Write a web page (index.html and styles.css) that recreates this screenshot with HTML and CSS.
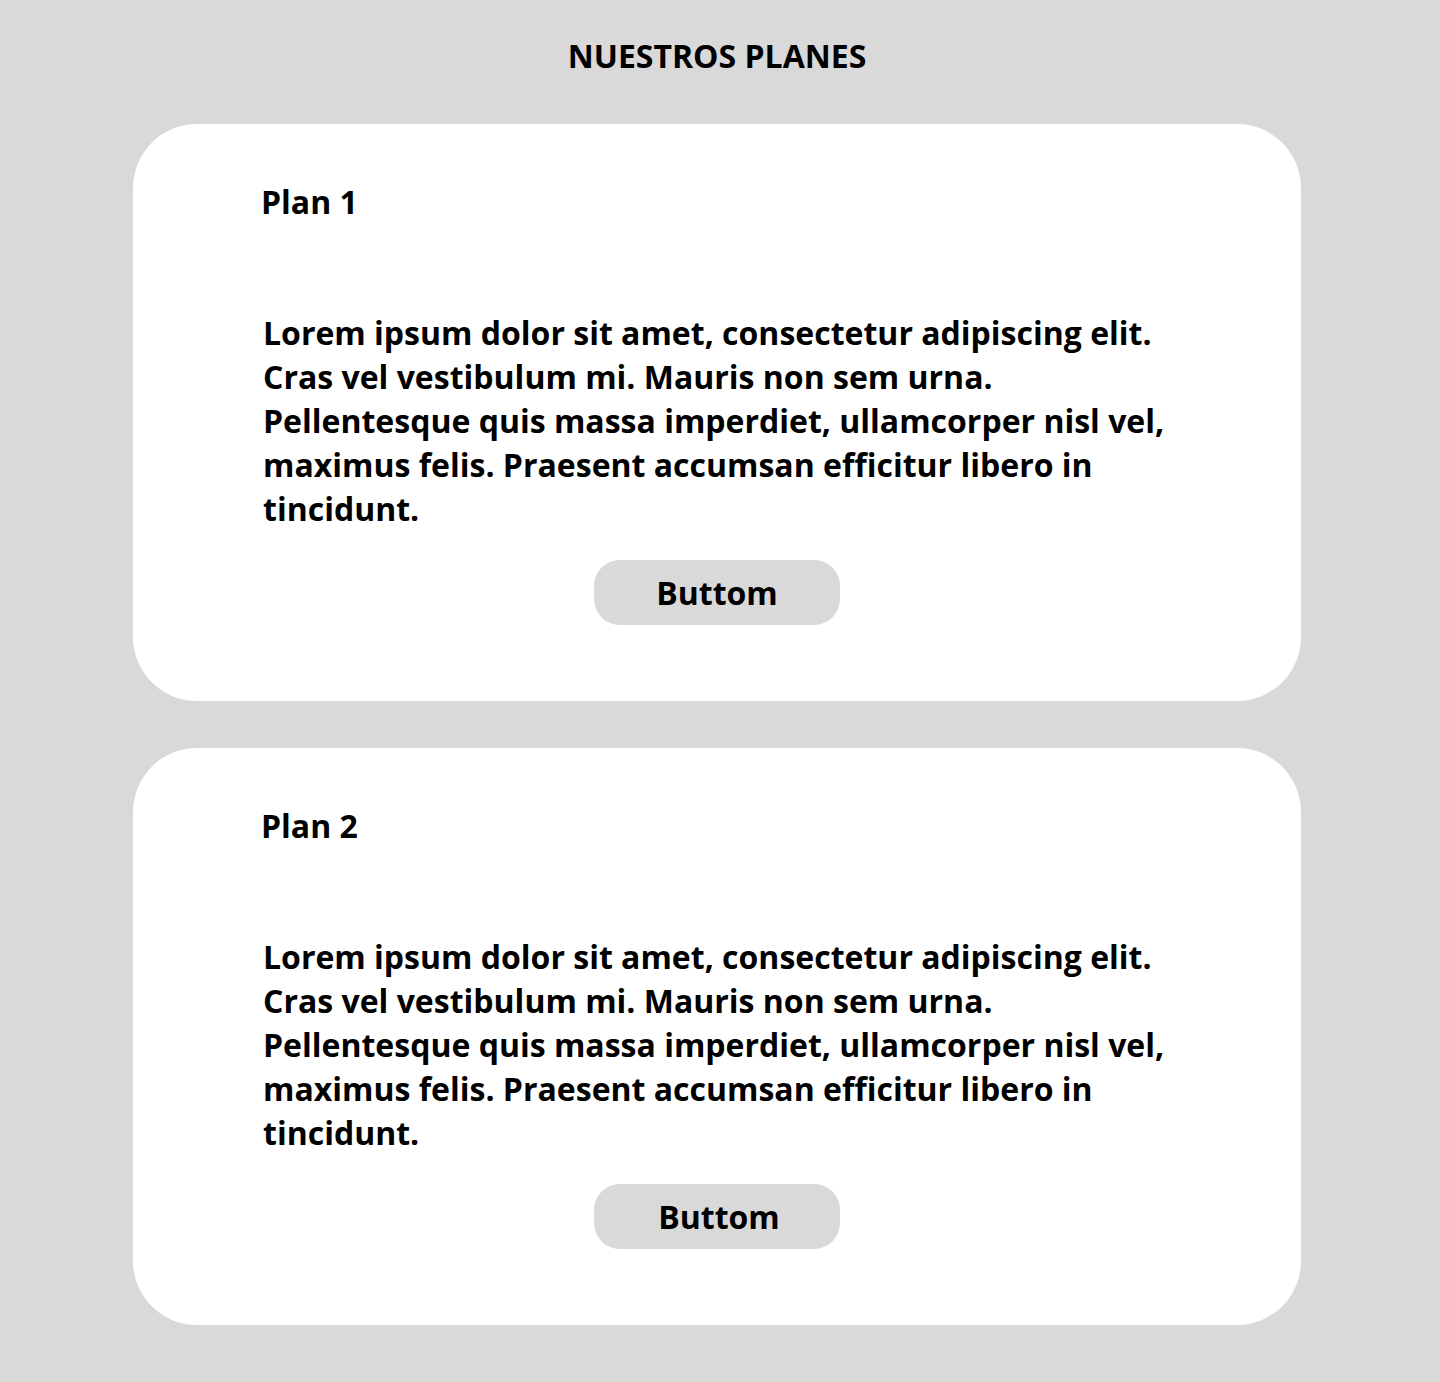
FILE: index.html
```html
<!DOCTYPE html>
<html lang="es">
<head>
<meta charset="utf-8">
<title>Nuestros planes</title>
<link rel="stylesheet" href="styles.css">
</head>
<body>
<main class="page">
  <h1 class="page-title">NUESTROS PLANES</h1>
  <section class="plans">
    <article class="plan-card">
      <h2 class="plan-name">Plan 1</h2>
      <p class="plan-text">Lorem ipsum dolor sit amet, consectetur adipiscing elit. Cras vel vestibulum mi. Mauris non sem urna. Pellentesque quis massa imperdiet, ullamcorper nisl vel, maximus felis. Praesent accumsan efficitur libero in tincidunt.</p>
      <button class="plan-button" type="button">Buttom</button>
    </article>
    <article class="plan-card">
      <h2 class="plan-name">Plan 2</h2>
      <p class="plan-text">Lorem ipsum dolor sit amet, consectetur adipiscing elit. Cras vel vestibulum mi. Mauris non sem urna. Pellentesque quis massa imperdiet, ullamcorper nisl vel, maximus felis. Praesent accumsan efficitur libero in tincidunt.</p>
      <button class="plan-button plan-button--offset" type="button">Buttom</button>
    </article>
  </section>
</main>
</body>
</html>
```

FILE: styles.css
```css
* {
  box-sizing: border-box;
}

html, body {
  margin: 0;
  padding: 0;
  background: #d9d9d9;
}

body {
  font-family: "Open Sans", "Liberation Sans", sans-serif;
  font-weight: 700;
  color: #000;
}

.page {
  width: 1434px;
  padding: 34px 0 57px;
  display: flex;
  flex-direction: column;
  align-items: center;
}

.page-title {
  margin: 0;
  font-size: 32px;
  line-height: 44px;
  font-weight: 700;
  text-align: center;
}

.plans {
  margin-top: 46px;
  display: flex;
  flex-direction: column;
  gap: 47px;
}

.plan-card {
  width: 1168px;
  height: 577px;
  background: #fff;
  border-radius: 64px;
  padding: 56px 128px 76px;
  display: flex;
  flex-direction: column;
  align-items: flex-start;
}

.plan-name {
  margin: 0;
  font-size: 32px;
  line-height: 44px;
  font-weight: 700;
}

.plan-text {
  margin: 87px 0 0 2px;
  width: 906px;
  font-size: 32px;
  line-height: 44px;
  font-weight: 700;
}

.plan-button {
  align-self: center;
  margin-top: 29px;
  width: 246px;
  height: 65px;
  border: none;
  border-radius: 26px;
  background: #d9d9d9;
  font-family: inherit;
  font-weight: 700;
  font-size: 32px;
  color: #000;
  padding: 0;
  cursor: pointer;
}

.plan-button--offset {
  padding-left: 4px;
}
```
